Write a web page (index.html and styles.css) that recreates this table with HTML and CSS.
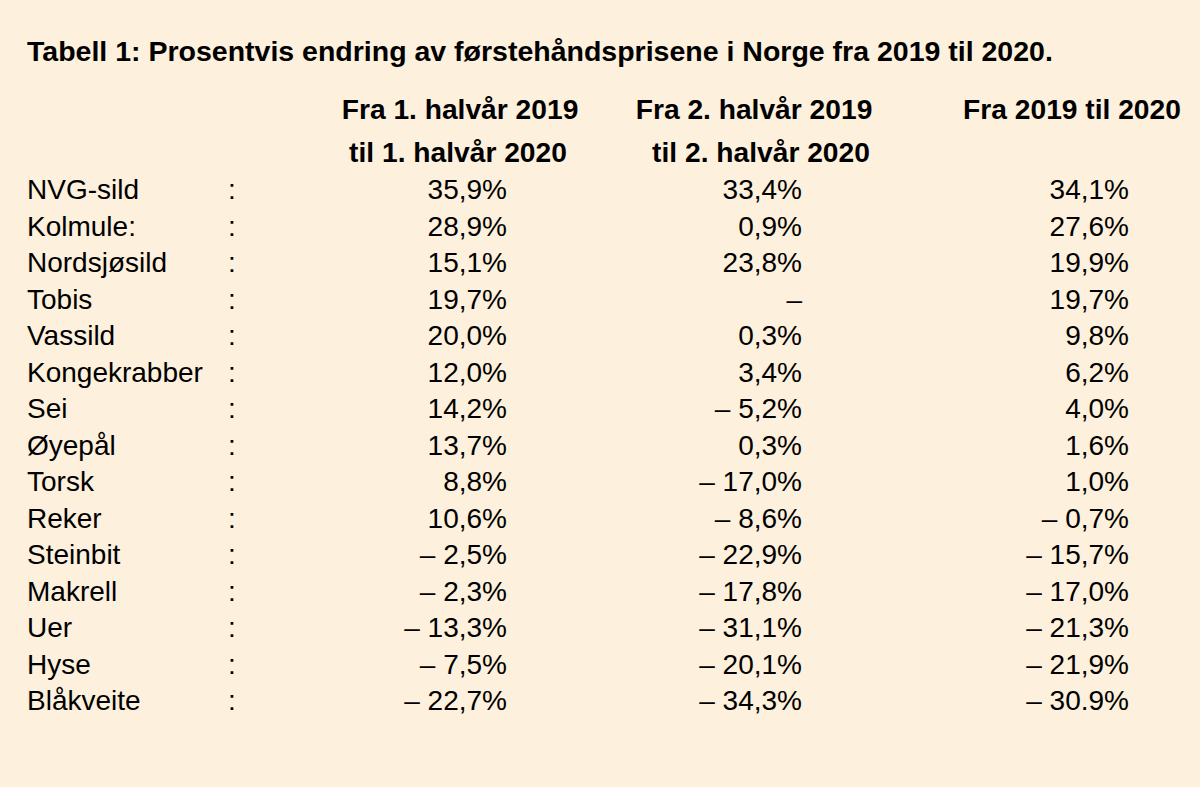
FILE: index.html
```html
<!DOCTYPE html>
<html lang="no">
<head>
<meta charset="utf-8">
<title>Tabell 1</title>
<link rel="stylesheet" href="styles.css">
</head>
<body>
<div class="page">
  <h1 class="title">Tabell 1: Prosentvis endring av førstehåndsprisene i Norge fra 2019 til 2020.</h1>
  <div class="head">
    <div class="h h1">Fra 1. halvår 2019<br><span class="l2a">til 1. halvår 2020</span></div>
    <div class="h h2">Fra 2. halvår 2019<br><span class="l2b">til 2. halvår 2020</span></div>
    <div class="h h3">Fra 2019 til 2020</div>
  </div>
  <div class="rows">
    <div class="row"><span class="name">NVG-sild</span><span class="colon">:</span><span class="v v1">35,9%</span><span class="v v2">33,4%</span><span class="v v3">34,1%</span></div>
    <div class="row"><span class="name">Kolmule:</span><span class="colon">:</span><span class="v v1">28,9%</span><span class="v v2">0,9%</span><span class="v v3">27,6%</span></div>
    <div class="row"><span class="name">Nordsjøsild</span><span class="colon">:</span><span class="v v1">15,1%</span><span class="v v2">23,8%</span><span class="v v3">19,9%</span></div>
    <div class="row"><span class="name">Tobis</span><span class="colon">:</span><span class="v v1">19,7%</span><span class="v v2">–</span><span class="v v3">19,7%</span></div>
    <div class="row"><span class="name">Vassild</span><span class="colon">:</span><span class="v v1">20,0%</span><span class="v v2">0,3%</span><span class="v v3">9,8%</span></div>
    <div class="row"><span class="name">Kongekrabber</span><span class="colon">:</span><span class="v v1">12,0%</span><span class="v v2">3,4%</span><span class="v v3">6,2%</span></div>
    <div class="row"><span class="name">Sei</span><span class="colon">:</span><span class="v v1">14,2%</span><span class="v v2">– 5,2%</span><span class="v v3">4,0%</span></div>
    <div class="row"><span class="name">Øyepål</span><span class="colon">:</span><span class="v v1">13,7%</span><span class="v v2">0,3%</span><span class="v v3">1,6%</span></div>
    <div class="row"><span class="name">Torsk</span><span class="colon">:</span><span class="v v1">8,8%</span><span class="v v2">– 17,0%</span><span class="v v3">1,0%</span></div>
    <div class="row"><span class="name">Reker</span><span class="colon">:</span><span class="v v1">10,6%</span><span class="v v2">– 8,6%</span><span class="v v3">– 0,7%</span></div>
    <div class="row"><span class="name">Steinbit</span><span class="colon">:</span><span class="v v1">– 2,5%</span><span class="v v2">– 22,9%</span><span class="v v3">– 15,7%</span></div>
    <div class="row"><span class="name">Makrell</span><span class="colon">:</span><span class="v v1">– 2,3%</span><span class="v v2">– 17,8%</span><span class="v v3">– 17,0%</span></div>
    <div class="row"><span class="name">Uer</span><span class="colon">:</span><span class="v v1">– 13,3%</span><span class="v v2">– 31,1%</span><span class="v v3">– 21,3%</span></div>
    <div class="row"><span class="name">Hyse</span><span class="colon">:</span><span class="v v1">– 7,5%</span><span class="v v2">– 20,1%</span><span class="v v3">– 21,9%</span></div>
    <div class="row"><span class="name">Blåkveite</span><span class="colon">:</span><span class="v v1">– 22,7%</span><span class="v v2">– 34,3%</span><span class="v v3">– 30.9%</span></div>
  </div>
</div>
</body>
</html>
```

FILE: styles.css
```css
html, body {
  margin: 0;
  padding: 0;
  background: #fdf0dc;
}
body {
  font-family: "Liberation Sans", Arial, sans-serif;
  color: #000;
  width: 1200px;
  height: 787px;
  overflow: hidden;
}
.page {
  padding: 34px 0 0 27px;
}
.title {
  margin: 0;
  font-size: 28.5px;
  font-weight: bold;
  line-height: 34px;
  white-space: nowrap;
}
.head {
  display: grid;
  grid-template-columns: 313px 240px 54px 240px 78px 240px;
  margin-top: 20px;
  font-weight: bold;
  font-size: 28.2px;
  line-height: 43px;
}
.h {
  text-align: center;
  white-space: nowrap;
}
.h1 { grid-column: 2; }
.h2 { grid-column: 4; }
.h3 { grid-column: 6; }
.l2a { padding-right: 4px; }
.l2b { padding-left: 14px; }
.rows {
  display: flex;
  flex-direction: column;
  font-size: 28px;
  line-height: 36.5px;
  margin-top: -2px;
}
.row {
  display: grid;
  grid-template-columns: 201px 20px 259px 295px 327px;
  white-space: nowrap;
}
.colon { text-align: left; }
.v { text-align: right; }
```
